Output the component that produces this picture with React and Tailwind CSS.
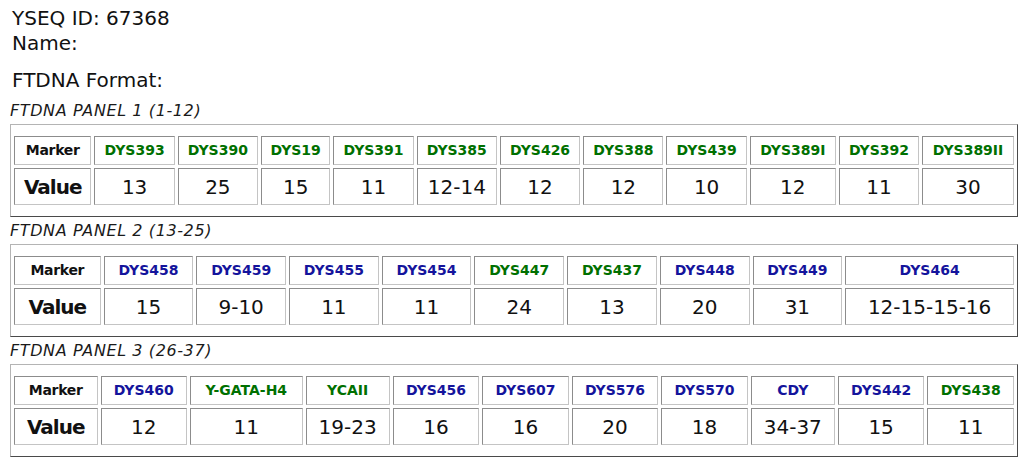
const G = "text-[#007000]";
const B = "text-[#14149c]";

const panels = [
  {
    title: "FTDNA PANEL 1 (1-12)",
    rows: [
      ["DYS393", "13", G],
      ["DYS390", "25", G],
      ["DYS19", "15", G],
      ["DYS391", "11", G],
      ["DYS385", "12-14", G],
      ["DYS426", "12", G],
      ["DYS388", "12", G],
      ["DYS439", "10", G],
      ["DYS389I", "12", G],
      ["DYS392", "11", G],
      ["DYS389II", "30", G],
    ],
  },
  {
    title: "FTDNA PANEL 2 (13-25)",
    rows: [
      ["DYS458", "15", B],
      ["DYS459", "9-10", B],
      ["DYS455", "11", B],
      ["DYS454", "11", B],
      ["DYS447", "24", G],
      ["DYS437", "13", G],
      ["DYS448", "20", B],
      ["DYS449", "31", B],
      ["DYS464", "12-15-15-16", B],
    ],
  },
  {
    title: "FTDNA PANEL 3 (26-37)",
    rows: [
      ["DYS460", "12", B],
      ["Y-GATA-H4", "11", G],
      ["YCAII", "19-23", G],
      ["DYS456", "16", B],
      ["DYS607", "16", B],
      ["DYS576", "20", B],
      ["DYS570", "18", B],
      ["CDY", "34-37", B],
      ["DYS442", "15", B],
      ["DYS438", "11", G],
    ],
  },
];

const cell =
  "border border-t-[#8c8c8c] border-l-[#8c8c8c] border-b-[#c4c4c4] border-r-[#c4c4c4] text-center px-[5px] py-0";

function Panel({ title, rows }) {
  return (
    <div>
      <div className="italic text-[16px] leading-[20px] tracking-[0.6px] pt-[4px] pb-[3px] text-[#1a1a1a]">
        {title}
      </div>
      <div className="border border-t-[#b4b4b4] border-l-[#b4b4b4] border-b-[#4a4a4a] border-r-[#4a4a4a] py-[8px]">
        <table className="w-full border-separate border-spacing-[3px]">
          <tbody>
            <tr>
              <td className={`${cell} h-[29px] font-bold text-[14px] tracking-[-0.3px] text-[#111]`}>Marker</td>
              {rows.map(([m, , c]) => (
                <td key={m} className={`${cell} h-[29px] font-bold text-[14px] ${c}`}>
                  {m}
                </td>
              ))}
            </tr>
            <tr>
              <td className={`${cell} h-[37px] font-bold text-[20px] tracking-[-1px]`}>Value</td>
              {rows.map(([m, v]) => (
                <td key={m} className={`${cell} h-[37px] text-[20px]`}>
                  {v}
                </td>
              ))}
            </tr>
          </tbody>
        </table>
      </div>
    </div>
  );
}

export default function App() {
  return (
    <div
      className="bg-white text-[#111] pl-[10px] pr-[6px] pt-[6px] w-full h-[458px] overflow-hidden"
      style={{ fontFamily: '"DejaVu Sans", "Noto Sans", sans-serif' }}
    >
      <div className="pl-[2px] text-[20px] leading-[25px]">YSEQ ID: 67368</div>
      <div className="pl-[2px] text-[20px] leading-[25px]">Name:</div>
      <div className="pl-[2px] text-[20px] leading-[25px] mt-[12px]">FTDNA Format:</div>
      <div className="mt-[4px]">
        {panels.map((p) => (
          <Panel key={p.title} {...p} />
        ))}
      </div>
    </div>
  );
}
